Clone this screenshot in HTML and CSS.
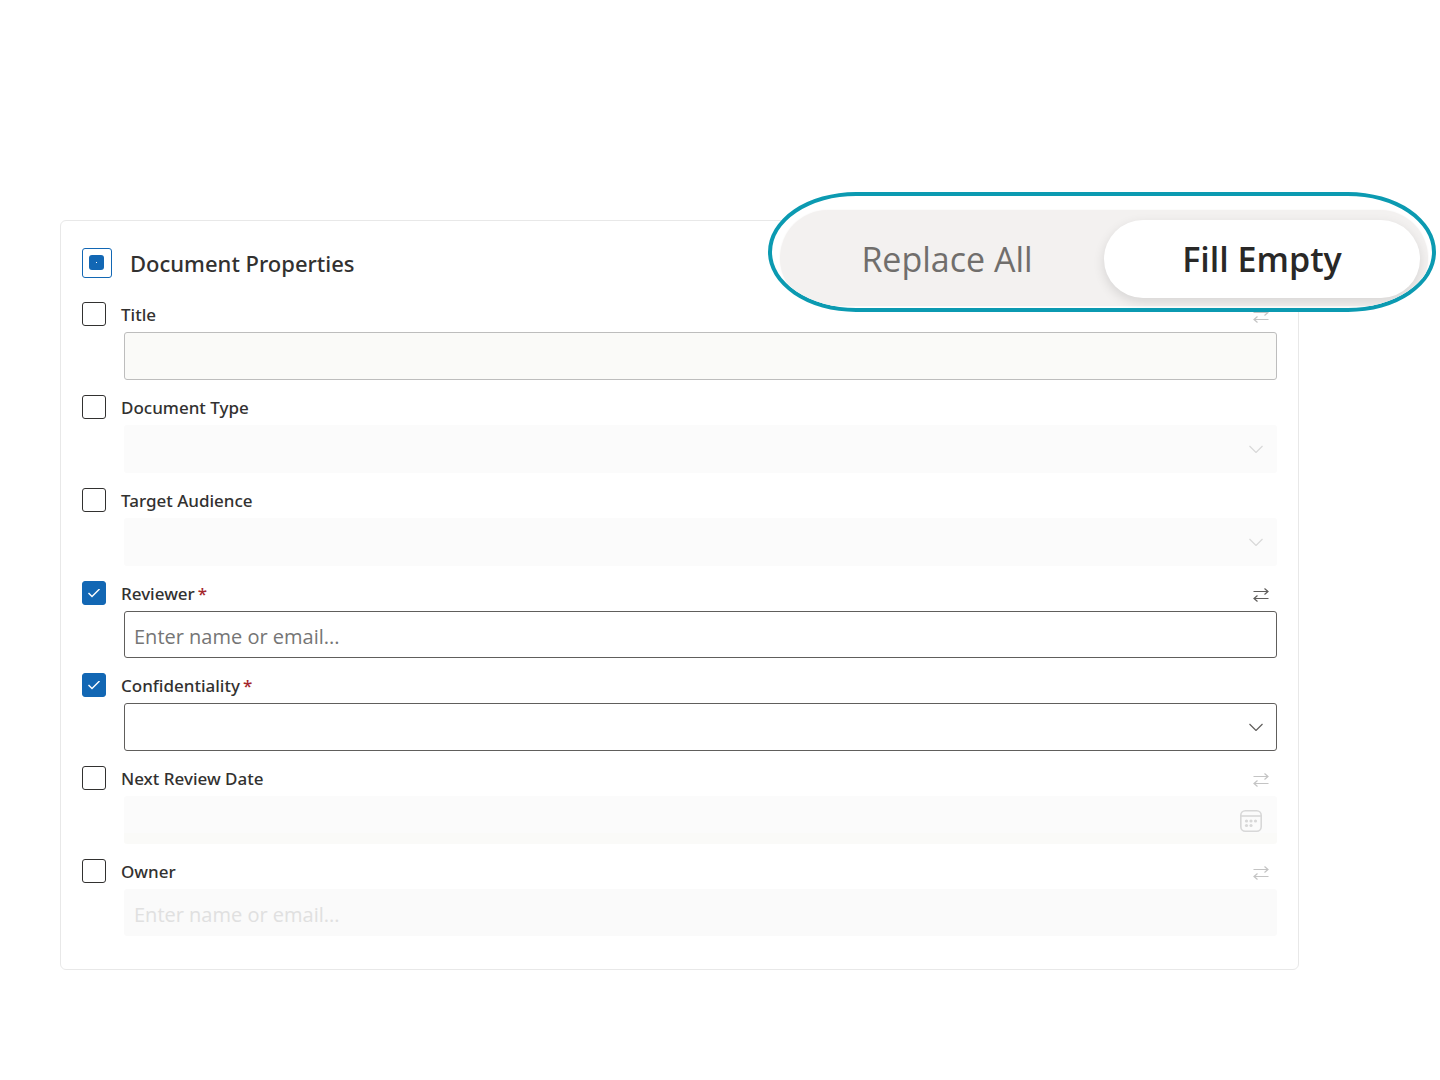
FILE: index.html
```html
<!DOCTYPE html>
<html lang="en">
<head>
<meta charset="utf-8">
<meta name="viewport" content="width=device-width, initial-scale=1">
<title>Document Properties</title>
<link rel="stylesheet" href="styles.css">
</head>
<body>
<svg class="sprite" aria-hidden="true">
  <symbol id="swap" viewBox="0 0 16 14"><path d="M.5 3.500h14.500M11.500.5l3.500 3-3.500 3M15.500 10.500H1M4.500 7.500l-3.500 3 3.500 3" fill="none" stroke="currentColor" stroke-width="1.200"/></symbol>
  <symbol id="chevron" viewBox="0 0 14 8"><path d="M.5 1 7 7.500 13.500 1" fill="none" stroke="currentColor" stroke-width="1.200"/></symbol>
</svg>
<main class="page">
  <form class="card">
    <header class="card-head">
      <input class="check check-all" type="checkbox" id="all" aria-labelledby="heading">
      <h1 class="heading" id="heading">Document Properties</h1>
    </header>

    <div class="row">
      <div class="row-head">
        <input class="check" type="checkbox" id="c1" aria-label="Include title">
        <label class="label" for="title">Title</label>
        <button class="swap" type="button" aria-label="Switch mode" disabled><svg><use href="#swap"/></svg></button>
      </div>
      <div class="field"><input class="control outlined-off" type="text" id="title" disabled></div>
    </div>

    <div class="row">
      <div class="row-head">
        <input class="check" type="checkbox" id="c2" aria-label="Include document type">
        <label class="label" for="type">Document Type</label>
      </div>
      <div class="field"><select class="control" id="type" disabled><option></option></select><svg class="chevron off"><use href="#chevron"/></svg></div>
    </div>

    <div class="row">
      <div class="row-head">
        <input class="check" type="checkbox" id="c3" aria-label="Include target audience">
        <label class="label" for="audience">Target Audience</label>
      </div>
      <div class="field"><select class="control" id="audience" disabled><option></option></select><svg class="chevron off"><use href="#chevron"/></svg></div>
    </div>

    <div class="row">
      <div class="row-head">
        <input class="check" type="checkbox" id="c4" aria-label="Include reviewer" checked>
        <label class="label" for="reviewer">Reviewer<span class="required">*</span></label>
        <button class="swap" type="button" aria-label="Switch mode"><svg><use href="#swap"/></svg></button>
      </div>
      <div class="field"><input class="control person" type="text" id="reviewer" placeholder="Enter name or email..."></div>
    </div>

    <div class="row">
      <div class="row-head">
        <input class="check" type="checkbox" id="c5" aria-label="Include confidentiality" checked>
        <label class="label" for="confidentiality">Confidentiality<span class="required">*</span></label>
      </div>
      <div class="field"><select class="control" id="confidentiality"><option></option></select><svg class="chevron"><use href="#chevron"/></svg></div>
    </div>

    <div class="row">
      <div class="row-head">
        <input class="check" type="checkbox" id="c6" aria-label="Include next review date">
        <label class="label" for="date">Next Review Date</label>
        <button class="swap" type="button" aria-label="Switch mode" disabled><svg><use href="#swap"/></svg></button>
      </div>
      <div class="field">
        <input class="control date" type="text" id="date" disabled>
        <svg class="calendar" viewBox="0 0 22 22" fill="none" stroke="currentColor" stroke-width="1.600"><rect x=".8" y=".8" width="20.400" height="20.400" rx="4.500"/><path d="M1 6h20"/><g fill="currentColor" stroke="none"><circle cx="6.500" cy="11" r="1.600"/><circle cx="11" cy="11" r="1.600"/><circle cx="15.500" cy="11" r="1.600"/><circle cx="6.500" cy="15.500" r="1.600"/><circle cx="11" cy="15.500" r="1.600"/></g></svg>
      </div>
    </div>

    <div class="row">
      <div class="row-head">
        <input class="check" type="checkbox" id="c7" aria-label="Include owner">
        <label class="label" for="owner">Owner</label>
        <button class="swap" type="button" aria-label="Switch mode" disabled><svg><use href="#swap"/></svg></button>
      </div>
      <div class="field"><input class="control person" type="text" id="owner" placeholder="Enter name or email..." disabled></div>
    </div>

    <div class="callout">
      <div class="segments" role="group" aria-label="Fill mode">
        <button class="segment" type="button" aria-pressed="false">Replace All</button>
        <button class="segment selected" type="button" aria-pressed="true">Fill Empty</button>
      </div>
    </div>
  </form>
</main>
<script src="script.js"></script>
</body>
</html>
```
FILE: script.js
```js
document.getElementById("all").indeterminate = true;
```
FILE: styles.css
```css
* { box-sizing: border-box; }

body {
  margin: 0;
  background: #fff;
  color: #323130;
  font-family: "Noto Sans", "Open Sans", sans-serif;
}

.sprite { position: absolute; width: 0; height: 0; }

.page { padding: 220px 141px 110px 60px; }

.card {
  position: relative;
  display: flex;
  flex-direction: column;
  gap: 15px;
  padding: 27px 21px 33px;
  border: 1px solid #e8e8e8;
  border-radius: 6px;
}

.card-head {
  display: flex;
  align-items: center;
  gap: 18px;
  height: 39px;
  padding-bottom: 9px;
}

.heading {
  margin: 0;
  font-size: 22px;
  font-weight: 500;
  line-height: 30px;
}

.row-head {
  display: flex;
  align-items: flex-start;
  gap: 15px;
  height: 30px;
}

.check {
  flex: none;
  display: grid;
  place-items: center;
  appearance: none;
  width: 24px;
  height: 24px;
  margin: 0;
  border: 1px solid #323130;
  border-radius: 3px;
  background: #fff;
}

.check:checked { border-color: #1267b4; background: #1267b4; }

.check:checked::after {
  content: "";
  width: 12px;
  height: 9px;
  background: #fff;
  clip-path: polygon(0 5px, 1px 4px, 4px 7px, 11px 0, 12px 1px, 4px 9px);
}

.check-all {
  place-items: start;
  width: 30px;
  height: 30px;
  padding: 6px;
  border-color: #1267b4;
}

.check-all::after {
  content: "";
  width: 15px;
  height: 15px;
  border-radius: 3px;
  background: linear-gradient(#fff, #fff) center / 1px 1px no-repeat #1267b4;
}

.label {
  flex: 1;
  font-size: 17px;
  font-weight: 500;
  line-height: 26px;
}

.required { margin-left: 3px; color: #a4262c; }

.swap {
  display: flex;
  margin: 7px 8px 0 0;
  padding: 0;
  border: 0;
  background: none;
  color: #605e5c;
}

.swap svg { width: 16px; height: 14px; }
.swap:disabled { color: #c4c4c4; }

.field {
  display: grid;
  align-items: center;
  margin-left: 42px;
}

.field > * { grid-area: 1 / 1; }

.control {
  appearance: none;
  width: 100%;
  height: 48px;
  margin: 0;
  padding: 4px 9px 0;
  border: 1px solid #605e5c;
  border-radius: 3px;
  background: #fff;
  color: inherit;
  font: 400 20px/28px "Open Sans", "Noto Sans", sans-serif;
}

.control:disabled { border-color: transparent; background: #fbfbfb; opacity: 1; }
.control.outlined-off:disabled { border-color: #bdbdbd; background: #fafaf8; }
.control.date:disabled { border: 0; background: linear-gradient(#fbfbfb 0 37px, #fafaf8 37px); }
.control.person { height: 47px; }
.control.person:disabled { background: #fafafa; }
.control::placeholder { color: #757575; opacity: 1; }
.control:disabled::placeholder { color: #e0e0e0; }

.chevron {
  justify-self: end;
  width: 14px;
  height: 8px;
  margin-right: 14px;
  color: #605e5c;
  pointer-events: none;
}

.chevron.off { color: #d8d8d8; }

.calendar {
  justify-self: end;
  width: 22px;
  height: 22px;
  margin: 2px 15px 0 0;
  color: #d8d8d8;
}

.callout {
  position: absolute;
  top: -29px;
  right: -138px;
  width: 668px;
  height: 120px;
  padding: 14px 4px 2px 8px;
  overflow: hidden;
  border: 4px solid #0b9ab1;
  border-radius: 88px / 60px;
  background: #fff;
}

.segments {
  display: grid;
  grid-template-columns: 324px 316px;
  height: 96px;
  padding: 10px 8px 8px 0;
  border-radius: 48px;
  background: #f3f1f0;
  box-shadow: 0 0 2px #f3f1f0;
}

.segment {
  padding: 0 0 0 10px;
  border: 0;
  border-radius: 39px;
  background: none;
  color: #706e6c;
  font: 400 34px/48px "Open Sans", "Noto Sans", sans-serif;
}

.segment.selected {
  padding: 0;
  background: #fff;
  color: #292827;
  font-weight: 600;
  box-shadow: 0 4px 12px rgba(0, 0, 0, 0.12);
}
```
